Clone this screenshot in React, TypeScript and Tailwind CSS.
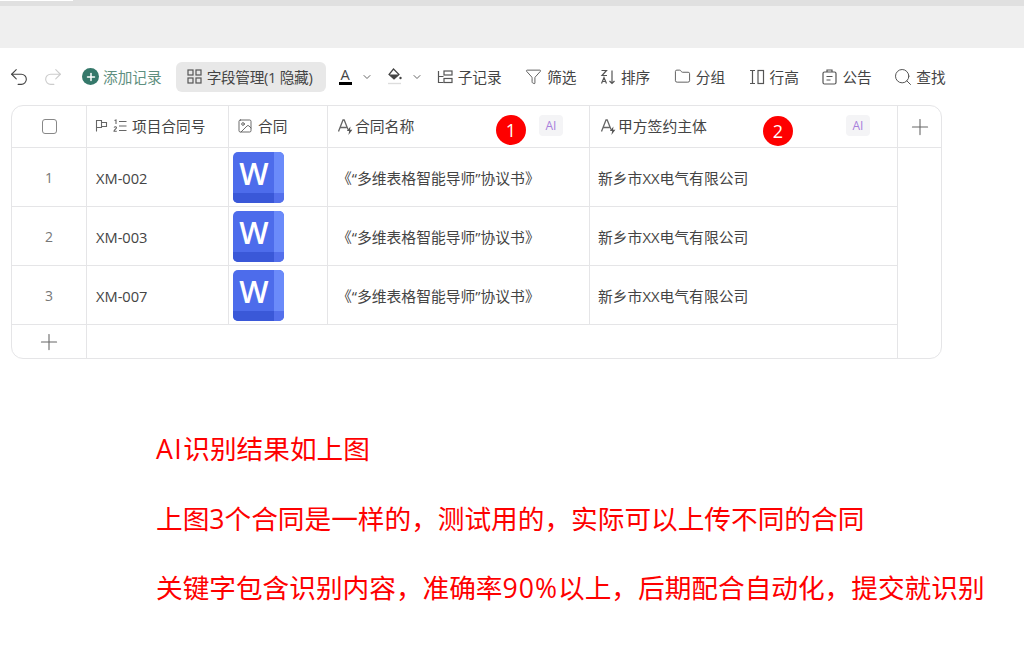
import React from 'react';
import { Undo2, Redo2, Plus, Image as ImageIcon, Filter, Folder, Search, ChevronDown } from 'lucide-react';

const rows = [
  { n: 1, id: 'XM-002' },
  { n: 2, id: 'XM-003' },
  { n: 3, id: 'XM-007' },
];

function TextAiIcon() {
  return (
    <svg width="18" height="18" viewBox="0 0 18 18" fill="none" className="shrink-0">
      <path d="M1.5 14.5 6 3h1.2L11 12.5M3 10.5h6.5" stroke="#666" strokeWidth="1.3" />
      <path d="M13.5 9.5 9.8 14h2.4l-.8 4 4-5.2h-2.4z" fill="#555" />
    </svg>
  );
}

function WordIcon() {
  return (
    <svg width="51" height="51" viewBox="0 0 51 51" className="block">
      <rect width="51" height="51" rx="5" fill="#4d6ceb" />
      <path d="M41 0h5a5 5 0 0 1 5 5v36H41z" fill="#6b8bfa" />
      <path d="M0 41h41v10H5a5 5 0 0 1-5-5z" fill="#3a58d8" />
      <path d="M41 41h10v5a5 5 0 0 1-5 5H41z" fill="#5470ec" />
      <text x="21" y="33" textAnchor="middle" fontSize="31" fontWeight="600" fill="#fff" fontFamily="'Open Sans', sans-serif">W</text>
    </svg>
  );
}

function AiTag() {
  return (
    <span className="flex h-[21px] w-6 items-center justify-center rounded bg-[#f4f4f6] text-xs text-[#a87fdc]">AI</span>
  );
}

function Badge({ n, className }: { n: number; className: string }) {
  return (
    <span className={`absolute flex h-[30px] w-[30px] items-center justify-center rounded-full bg-[#fe0000] text-lg text-white ${className}`}>
      {n}
    </span>
  );
}

function Tool({ icon, label }: { icon: React.ReactNode; label: string }) {
  return (
    <div className="flex items-center gap-[5px] text-[#444]">
      {icon}
      <span>{label}</span>
    </div>
  );
}

export default function App() {
  const line = 'border-[#e5e5e7]';
  return (
    <div className="h-[656px] w-[1024px] overflow-hidden bg-white font-['Open_Sans','Noto_Sans_CJK_SC',sans-serif] text-[14.67px]">
      {/* browser chrome */}
      <div className="h-[6px] bg-[#e0e0e0]">
        <div className="h-px w-[73px] bg-white" />
      </div>
      <div className="h-[42px] bg-[#efefef]" />

      {/* toolbar */}
      <div className="flex h-[57px] items-center pl-2">
        <Undo2 size={22} strokeWidth={1.2} className="text-[#444]" />
        <Redo2 size={22} strokeWidth={1.2} className="ml-3 text-[#ccc]" />
        <div className="ml-[18px] flex items-center gap-[4px] text-[#5f8f80]">
          <span className="flex h-[17px] w-[17px] items-center justify-center rounded-full bg-[#35786a]">
            <Plus size={12} strokeWidth={3} className="text-white" />
          </span>
          <span className="whitespace-nowrap">添加记录</span>
        </div>
        <div className="ml-[14px] flex h-[30px] w-[150px] shrink-0 items-center gap-[5px] rounded-md bg-[#e8e8e8] pl-[11px] text-[#444]">
          <svg width="15" height="15" viewBox="0 0 15 15" fill="none" stroke="#555" strokeWidth="1.2">
            <rect x="1" y="1" width="5" height="5" />
            <rect x="9" y="1" width="5" height="5" />
            <rect x="1" y="9" width="5" height="5" />
            <rect x="9" y="9" width="5" height="5" />
          </svg>
          <span className="whitespace-nowrap tracking-[-0.3px]">字段管理(1 隐藏)</span>
        </div>
        <div className="ml-[13px] flex w-[13px] flex-col items-center">
          <span className="leading-[13px] text-[#444]">A</span>
          <span className="mt-[1px] h-[3px] w-[13px] bg-black" />
        </div>
        <ChevronDown size={12} className="ml-[9px] text-[#666]" />
        <svg width="16" height="17" viewBox="0 0 16 17" fill="none" className="ml-[14px]">
          <path d="M6.5 1 12 6.5 7 11 2 6.5z" stroke="#444" strokeWidth="1.2" />
          <path d="M2.5 6.5h9.5L7 11z" fill="#444" />
          <circle cx="13.5" cy="10" r="1.2" fill="#444" />
          <path d="M1 15.5h13" stroke="#ddd" strokeWidth="1.4" />
        </svg>
        <ChevronDown size={12} className="ml-[8px] text-[#666]" />
        <div className="ml-[14px] flex gap-[23.5px] whitespace-nowrap">
          <Tool
            label="子记录"
            icon={
              <svg width="16" height="16" viewBox="0 0 16 16" fill="none" stroke="#555" strokeWidth="1.2">
                <path d="M1.5 2v11.5h5M1.5 7.5h5" />
                <rect x="7" y="2" width="8" height="4" />
                <rect x="7" y="9.5" width="8" height="4" />
              </svg>
            }
          />
          <Tool label="筛选" icon={<Filter size={17} strokeWidth={1.3} className="text-[#555]" />} />
          <Tool
            label="排序"
            icon={
              <svg width="16" height="16" viewBox="0 0 16 16" fill="none" stroke="#555" strokeWidth="1.2">
                <path d="M1.5 1.5h5L2 6.5h5M1.5 14.5l2.5-6 2.5 6M2.5 12.5h3M12 1.5v13M9.5 12l2.5 2.5 2.5-2.5" />
              </svg>
            }
          />
          <Tool label="分组" icon={<Folder size={17} strokeWidth={1.3} className="text-[#555]" />} />
          <Tool
            label="行高"
            icon={
              <svg width="16" height="16" viewBox="0 0 16 16" fill="none" stroke="#555" strokeWidth="1.2">
                <path d="M1 1.5h5M1 14.5h5M3.5 1.5v13" />
                <rect x="9" y="1.5" width="5.5" height="13" />
              </svg>
            }
          />
          <Tool
            label="公告"
            icon={
              <svg width="15" height="16" viewBox="0 0 15 16" fill="none" stroke="#555" strokeWidth="1.2">
                <rect x="1" y="3" width="13" height="12" rx="1.5" />
                <path d="M5 3V1h5v2M4.5 7.5h6M4.5 11h4" />
              </svg>
            }
          />
          <div className="-ml-[2px] flex items-center gap-[3px] text-[#444]">
            <Search size={20} strokeWidth={1.2} className="text-[#555]" />
            <span>查找</span>
          </div>
        </div>
      </div>

      {/* table */}
      <div className={`relative ml-[11px] grid h-[254px] w-[931px] grid-cols-[75px_142px_99px_262px_308px_1fr] grid-rows-[42px_59px_59px_59px_1fr] overflow-hidden rounded-xl border ${line} text-[#444]`}>
        <div className={`flex items-center justify-center border-b border-r ${line}`}>
          <span className="h-[15px] w-[15px] rounded-[3px] border border-[#888]" />
        </div>
        <div className={`flex items-center gap-[5px] border-b border-r pb-[2px] pl-2 ${line}`}>
          <svg width="13" height="13" viewBox="0 0 13 13" fill="none" stroke="#666" strokeWidth="1.1">
            <path d="M1.5 12.5V1.5h5v7h-5M6.5 3.5h5v4h-5" />
          </svg>
          <svg width="14" height="14" viewBox="0 0 14 14" fill="none" stroke="#666" strokeWidth="1.1">
            <path d="M1.5 1.5 3 1v4M1 8.5c1-1.2 2.5-.8 2.5.3 0 1-2.5 2-2.5 3.5h2.8M6 2.5h7.5M6 7h7.5M6 11.5h7.5" />
          </svg>
          <span className="whitespace-nowrap">项目合同号</span>
        </div>
        <div className={`flex items-center gap-[5px] border-b border-r pb-[2px] pl-2 ${line}`}>
          <ImageIcon size={16} strokeWidth={1.3} className="text-[#555]" />
          合同
        </div>
        <div className={`relative flex items-center border-b border-r pb-px pl-[9px] ${line}`}>
          <TextAiIcon />
          <span className="whitespace-nowrap text-[14.8px]">合同名称</span>
          <Badge n={1} className="left-[168px] top-[9px]" />
          <span className="absolute left-[211px] top-[9px]"><AiTag /></span>
        </div>
        <div className={`relative flex items-center border-b border-r pb-px pl-[10px] ${line}`}>
          <TextAiIcon />
          <span className="whitespace-nowrap text-[14.8px]">甲方签约主体</span>
          <Badge n={2} className="left-[173px] top-[10px]" />
          <span className="absolute left-[256px] top-[9px]"><AiTag /></span>
        </div>
        <div className={`flex items-center justify-center border-b ${line}`}>
          <Plus size={26} strokeWidth={1} className="text-[#666]" />
        </div>

        {rows.map((r) => (
          <React.Fragment key={r.n}>
            <div className={`flex items-start justify-center border-b border-r pt-5 text-sm text-[#777] ${line}`}>{r.n}</div>
            <div className={`flex items-center border-b border-r pl-[9px] pt-px ${line}`}>{r.id}</div>
            <div className={`flex items-center border-b border-r pl-1 ${line}`}>
              <WordIcon />
            </div>
            <div className={`flex items-center whitespace-nowrap border-b border-r pl-[9px] pt-[2px] text-[14.8px] ${line}`}>《“多维表格智能导师”协议书》</div>
            <div className={`flex items-center whitespace-nowrap border-b border-r pl-2 pt-[2px] text-[14.8px] ${line}`}>新乡市XX电气有限公司</div>
            {r.n === 1 ? <div className="row-span-4 col-start-6 row-start-2" /> : null}
          </React.Fragment>
        ))}
        <div className={`flex items-center justify-center border-r ${line}`}>
          <Plus size={26} strokeWidth={1} className="text-[#666]" />
        </div>
        <div className={`col-span-4 border-r ${line}`} />
      </div>

      {/* notes */}
      <div className="ml-[156px] mt-[72px] flex flex-col gap-[34.5px] whitespace-nowrap text-[26.67px] leading-[35px] text-[#fe0000]">
        <p><span className="tracking-[1.5px]">AI</span>识别结果如上图</p>
        <p>上图3个合同是一样的，测试用的，实际可以上传不同的合同</p>
        <p>关键字包含识别内容，准确率<span className="tracking-[1px]">90%</span>以上，后期配合自动化，提交就识别</p>
      </div>
    </div>
  );
}
